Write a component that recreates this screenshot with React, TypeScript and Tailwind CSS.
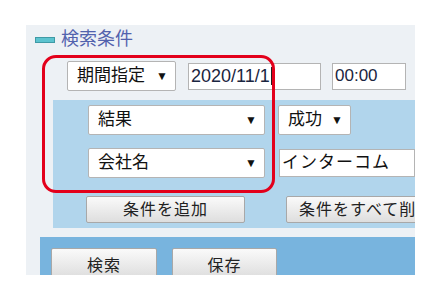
import React from "react";

const jp = { fontFamily: '"Liberation Sans", "Noto Sans CJK JP", sans-serif' };

const Select = ({ label, className }: { label: string; className: string }) => (
  <div
    className={`flex items-center justify-between bg-white border border-[#b4b4b4] rounded-[2px] pl-[9px] pr-[7px] text-[17px] text-[#111] ${className}`}
  >
    <span>{label}</span>
    <span className="text-[12px]">▼</span>
  </div>
);

const Btn = ({ label, className }: { label: string; className: string }) => (
  <div
    className={`flex items-center justify-center whitespace-nowrap overflow-hidden border border-[#a8a8a8] rounded-[2px] bg-gradient-to-b from-[#fafafa] to-[#dedede] text-[16px] tracking-[1px] text-[#222] ${className}`}
  >
    {label}
  </div>
);

export default function App() {
  return (
    <div className="w-[440px] h-[300px] bg-white pt-[25px] pl-[26px]" style={jp}>
      <div className="relative w-[389px] h-[250px] bg-[#edf1f5] overflow-hidden">
        <div className="flex items-center gap-[6px] pl-[9px] pt-[5px] h-[24px]">
          <div className="w-[20px] h-[6px] bg-[#5cc3cf] border border-[#3f9aa6]" />
          <span className="text-[18px] text-[#5262ad]">検索条件</span>
        </div>

        <div className="flex items-center mt-[12px] pl-[41px] h-[30px]">
          <Select label="期間指定" className="w-[109px] h-[30px]" />
          <div className="ml-[12px] w-[133px] h-[27px] bg-white border border-[#b4b4b4] flex items-center pl-[2px] text-[18px] text-[#1a2540]">
            2020/11/1<span className="ml-[1px] w-[1px] h-[18px] bg-[#222]" />
          </div>
          <div className="ml-[11px] w-[74px] h-[27px] bg-white border border-[#b4b4b4] flex items-center pl-[2px] text-[17px] text-[#1a2540]">
            00:00
          </div>
        </div>

        <div className="mt-[9px] ml-[27px] h-[128px] bg-[#b1d5ec] pt-[5px] pl-[35px]">
          <div className="flex items-center h-[30px]">
            <Select label="結果" className="w-[177px] h-[30px]" />
            <Select label="成功" className="ml-[13px] w-[73px] h-[30px]" />
          </div>
          <div className="flex items-center mt-[13px] h-[30px]">
            <Select label="会社名" className="w-[177px] h-[30px]" />
            <div className="ml-[14px] flex-1 h-[28px] bg-white border border-[#b4b4b4] flex items-center pl-[2px] text-[17px] tracking-[1px] text-[#111]">
              インターコム
            </div>
          </div>
          <div className="flex items-center mt-[18px] -ml-[2px]">
            <Btn label="条件を追加" className="w-[159px] h-[27px] shrink-0" />
            <Btn label="条件をすべて削除" className="ml-[41px] w-[150px] h-[27px] shrink-0 justify-start pl-[12px]" />
          </div>
        </div>

        <div className="mt-[9px] ml-[14px] h-[40px] bg-[#78b4de] pt-[11px] pl-[11px] flex">
          <Btn label="検索" className="w-[106px] h-[30px] items-start pt-[5px]" />
          <Btn label="保存" className="ml-[15px] w-[105px] h-[30px] items-start pt-[5px]" />
        </div>

        <div className="absolute left-[16px] top-[30px] w-[233px] h-[138px] border-[3px] border-[#e3001b] rounded-[14px]" />
      </div>
    </div>
  );
}
